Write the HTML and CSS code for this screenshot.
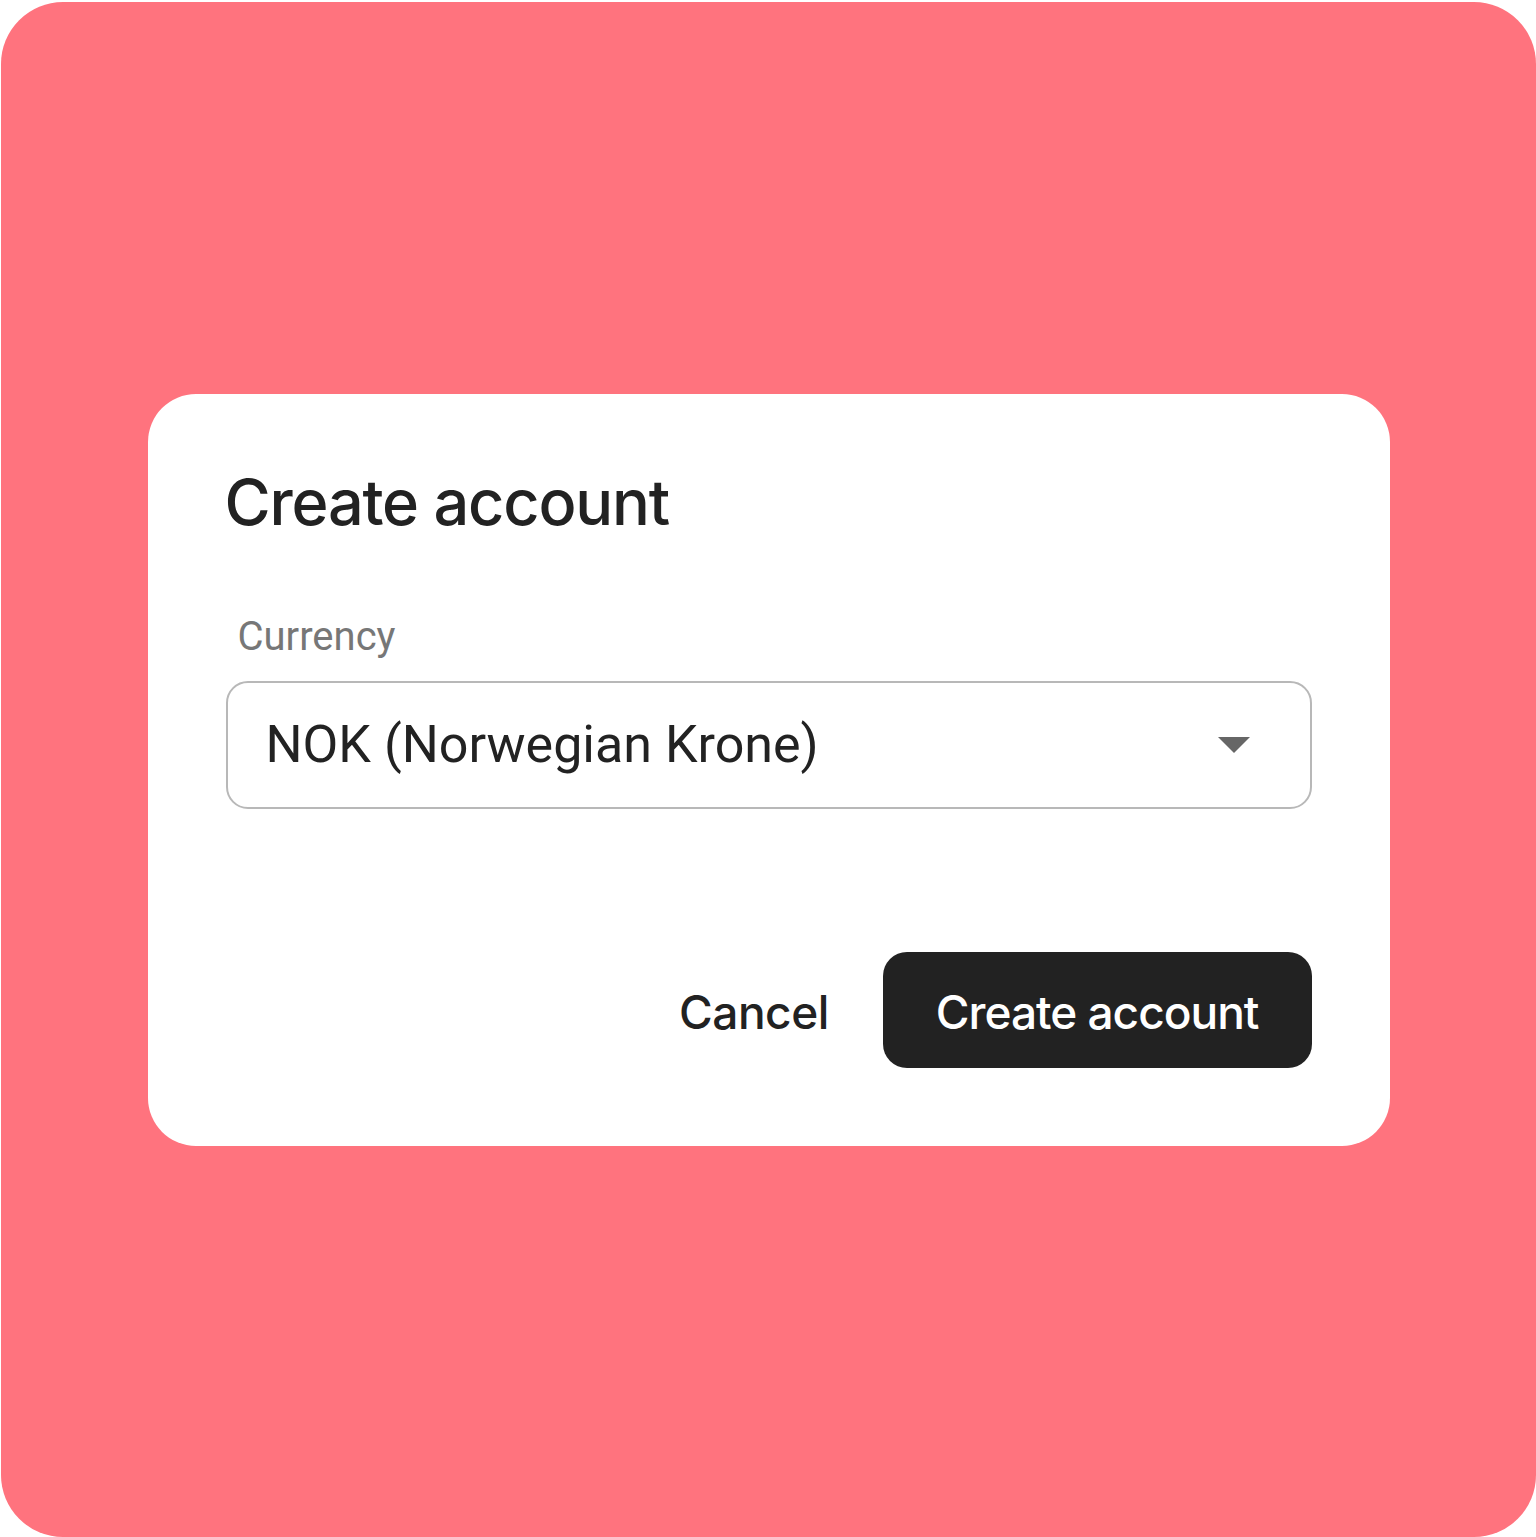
FILE: index.html
```html
<!DOCTYPE html>
<html>
<head>
<meta charset="utf-8">
<link rel="stylesheet" href="styles.css">
</head>
<body>
<div class="frame">
  <div class="dialog">
    <h1 class="title">Create account</h1>
    <div class="field">
      <label class="label">Currency</label>
      <div class="select">
        <span class="select-value">NOK (Norwegian Krone)</span>
        <svg class="caret" width="32" height="16" viewBox="0 0 32 16"><path d="M0 0 H32 L16 16 Z" fill="#666"/></svg>
      </div>
    </div>
    <div class="actions">
      <button class="btn btn-text">Cancel</button>
      <button class="btn btn-primary">Create account</button>
    </div>
  </div>
</div>
</body>
</html>
```
FILE: styles.css
```css
html, body {
  margin: 0;
  padding: 0;
  background: #ffffff;
}
.frame {
  box-sizing: border-box;
  width: 1535px;
  height: 1535px;
  margin: 2px 0 0 1px;
  background: #ff737e;
  border-radius: 62px;
  display: flex;
  align-items: center;
  justify-content: center;
}
.dialog {
  box-sizing: border-box;
  width: 1242px;
  height: 752px;
  background: #ffffff;
  border-radius: 48px;
  padding: 76px 78px 78px 78px;
  display: flex;
  flex-direction: column;
}
.title {
  margin: 0 0 0 -1px;
  font-family: Inter, "Noto Sans", sans-serif;
  font-weight: 500;
  font-size: 63px;
  line-height: 64px;
  color: #222222;
  letter-spacing: -1.2px;
}
.field {
  margin-top: 83px;
  display: flex;
  flex-direction: column;
}
.label {
  font-family: Roboto, "Liberation Sans", sans-serif;
  font-size: 40px;
  line-height: 40px;
  color: #777777;
  padding-left: 12px;
}
.select {
  margin-top: 24px;
  box-sizing: border-box;
  height: 128px;
  border: 2px solid #b8b8b8;
  border-radius: 22px;
  display: flex;
  align-items: center;
  justify-content: space-between;
  padding: 0 60px 0 38px;
}
.select-value {
  font-family: Roboto, "Liberation Sans", sans-serif;
  font-size: 52px;
  color: #222222;
}
.caret {
  display: block;
}
.actions {
  margin-top: auto;
  display: flex;
  justify-content: flex-end;
  align-items: center;
  gap: 54px;
}
.btn {
  font-family: Inter, "Noto Sans", sans-serif;
  font-weight: 500;
  font-size: 46px;
  border: none;
  cursor: pointer;
}
.btn-text {
  background: transparent;
  color: #222222;
  padding: 4px 0 0 0;
  letter-spacing: -0.5px;
}
.btn-primary {
  background: #222222;
  color: #ffffff;
  height: 116px;
  padding: 4px 53px 0 53px;
  border-radius: 24px;
  letter-spacing: -1px;
}
```
